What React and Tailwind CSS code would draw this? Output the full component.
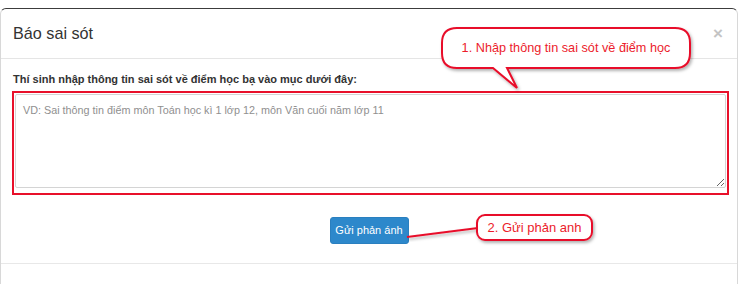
import React from 'react';

const App = () => {
  return (
    <div className="relative w-[742px] h-[284px] overflow-hidden bg-white pt-[8px] font-['Liberation_Sans',Arial,sans-serif] text-[#333]">
      {/* MODAL */}
      <div className="w-[738px] h-[290px] rounded-t-[6px] border-t border-x border-t-[#3c3c3c] border-x-[#d8d8d8]">
        {/* header */}
        <div className="flex h-[50px] items-center justify-between border-b border-[#e5e5e5] pl-[12px] pr-[14px]">
          <h4 className="text-[16.2px] leading-none text-[#333]">Báo sai sót</h4>
          <span className="text-[17px] font-bold leading-none text-[#c4c4c4]">×</span>
        </div>

        {/* body */}
        <div className="pt-[13px]">
          <label className="block pl-[12px] text-[11px] font-bold leading-[14px] text-[#333]">
            Thí sinh nhập thông tin sai sót về điểm học bạ vào mục dưới đây:
          </label>
          <div className="ml-[11px] mt-[5px] w-[717px] border-2 border-[#e8102a] px-[1px] pt-[1px] pb-[5px]">
            <textarea
              placeholder="VD: Sai thông tin điểm môn Toán học kì 1 lớp 12, môn Văn cuối năm lớp 11"
              className="block h-[94px] w-full rounded-[2px] border border-[#d4d4d4] px-[7px] py-[8px] text-[10.8px] leading-[14px] text-[#555] outline-none placeholder:text-[#8f8f8f]"
            />
          </div>
        </div>

        {/* footer */}
        <div className="flex h-[69px] items-center justify-center border-b border-[#e8e8e8] pt-[2px]">
          <button className="h-[27px] w-[79px] rounded-[3px] border border-[#2a7fbf] bg-[#2d88cb] text-[11px] text-white">
            Gửi phản ánh
          </button>
        </div>
      </div>

      {/* CALLOUTS */}
      <svg className="pointer-events-none absolute left-0 top-0" width="742" height="284">
        <defs>
          <filter id="sh" x="-10%" y="-30%" width="130%" height="180%">
            <feDropShadow dx="1.5" dy="2" stdDeviation="1.5" floodColor="#000" floodOpacity="0.3" />
          </filter>
        </defs>
        <path
          d="M457,28 H675 Q690,28 690,43 V53 Q690,68 675,68 H507 L517,88 L493,68 H457 Q442,68 442,53 V43 Q442,28 457,28 Z"
          fill="#fff"
          stroke="#e8102a"
          strokeWidth="2"
          filter="url(#sh)"
        />
        <line x1="407" y1="237" x2="478" y2="228" stroke="#e8102a" strokeWidth="2" filter="url(#sh)" />
        <rect x="477" y="215" width="115" height="25" rx="8" fill="#fff" stroke="#e8102a" strokeWidth="2" filter="url(#sh)" />
      </svg>
      <div className="absolute left-[442px] top-[28px] flex h-[40px] w-[248px] items-center justify-center text-[12.7px] leading-none text-[#ec1c2c]">
        1. Nhập thông tin sai sót về điểm học
      </div>
      <div className="absolute left-[477px] top-[215px] flex h-[25px] w-[115px] items-center justify-center text-[13px] leading-none text-[#ec1c2c]">
        2. Gửi phản anh
      </div>
    </div>
  );
};

export default App;
